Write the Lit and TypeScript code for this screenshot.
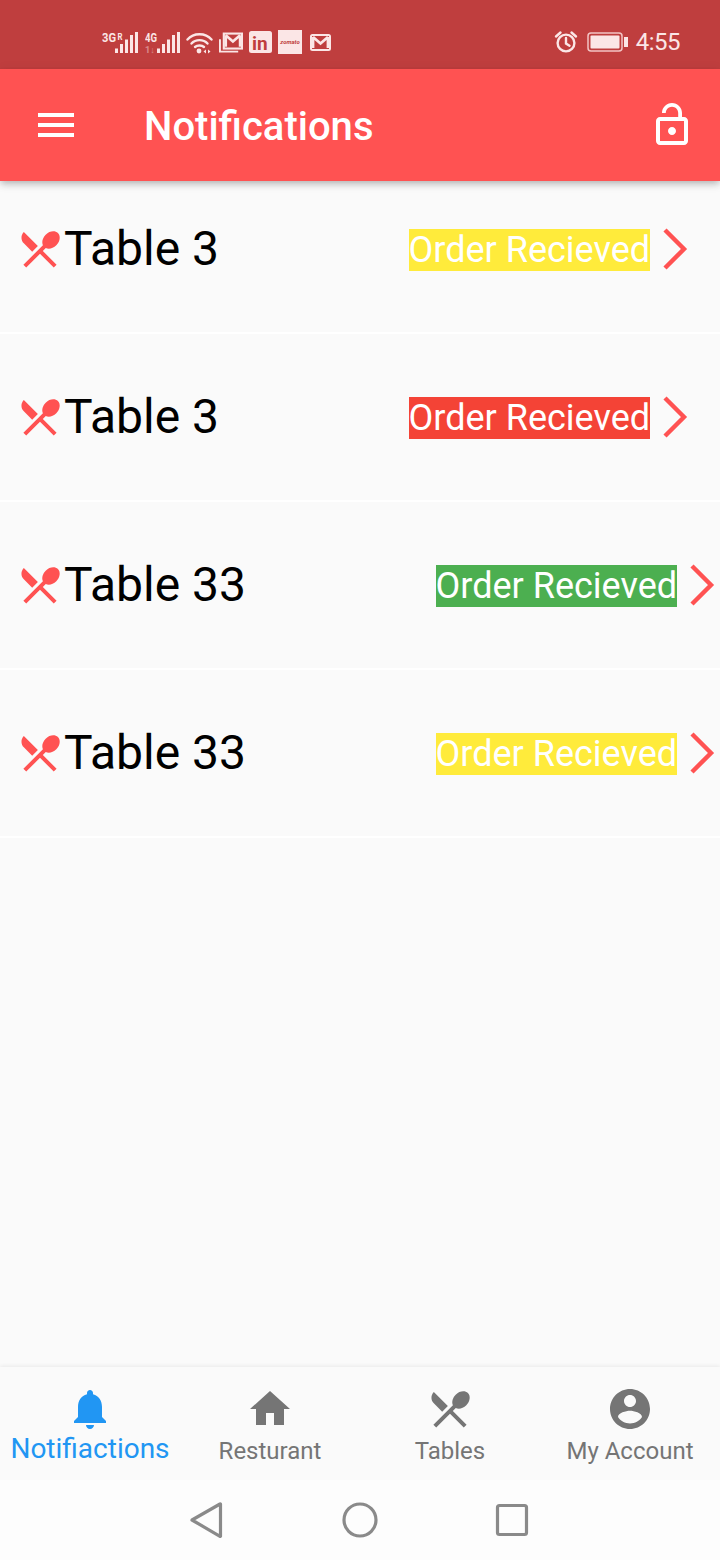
import { LitElement, html, css, svg } from "lit";
import { customElement } from "lit/decorators.js";

const DINING = "M8.1 13.34l2.83-2.83L3.91 3.5c-1.56 1.56-1.56 4.09 0 5.66l4.19 4.18zm6.78-1.81c1.53.71 3.68.21 5.27-1.38 1.91-1.91 2.28-4.65.81-6.12-1.46-1.46-4.2-1.1-6.12.81-1.59 1.59-2.09 3.74-1.38 5.27L3.7 19.87l1.41 1.41L12 14.41l6.88 6.88 1.41-1.41L13.41 13l1.47-1.47z";
const BELL = "M12 22c1.1 0 2-.9 2-2h-4c0 1.1.89 2 2 2zm6-6v-5c0-3.07-1.64-5.64-4.5-6.32V4c0-.83-.67-1.5-1.5-1.5s-1.5.67-1.5 1.5v.68C7.63 5.36 6 7.92 6 11v5l-2 2v1h16v-1l-2-2z";
const HOME = "M10 20v-6h4v6h5v-8h3L12 3 2 12h3v8z";
const ACCOUNT = "M12 2C6.48 2 2 6.48 2 12s4.48 10 10 10 10-4.48 10-10S17.52 2 12 2zm0 3c1.66 0 3 1.34 3 3s-1.34 3-3 3-3-1.34-3-3 1.34-3 3-3zm0 14.2c-2.5 0-4.71-1.28-6-3.22.03-1.99 4-3.08 6-3.08 1.99 0 5.97 1.09 6 3.08-1.29 1.94-3.5 3.22-6 3.22z";
const LOCK = "M12 17c1.1 0 2-.9 2-2s-.9-2-2-2-2 .9-2 2 .9 2 2 2zm6-9h-1V6c0-2.76-2.24-5-5-5S7 3.24 7 6h1.9c0-1.71 1.39-3.1 3.1-3.1 1.71 0 3.1 1.39 3.1 3.1v2H6c-1.1 0-2 .9-2 2v10c0 1.1.9 2 2 2h12c1.1 0 2-.9 2-2V10c0-1.1-.9-2-2-2zm0 12H6V10h12v10z";
const MENU = "M3 18h18v-2H3v2zm0-5h18v-2H3v2zm0-7v2h18V6H3z";

const icon = (d: string, size: number, cls = "") =>
  html`<svg class=${cls} width=${size} height=${size} viewBox="0 0 24 24" fill="currentColor"><path d=${d}></path></svg>`;

const bars = () => svg`
  <rect x="0" y="16.5" width="3" height="4.5" />
  <rect x="5" y="12" width="3" height="9" />
  <rect x="10" y="7.5" width="3" height="13.5" />
  <rect x="15" y="3" width="3" height="18" />
  <rect x="20" y="0" width="3" height="21" />`;

interface Row { table: string; color: string; }
const ROWS: Row[] = [
  { table: "Table 3", color: "#ffeb3b" },
  { table: "Table 3", color: "#f44336" },
  { table: "Table 33", color: "#4caf50" },
  { table: "Table 33", color: "#ffeb3b" },
];

const TABS = [
  { label: "Notifiactions", d: BELL, active: true },
  { label: "Resturant", d: HOME, active: false },
  { label: "Tables", d: DINING, active: false },
  { label: "My Account", d: ACCOUNT, active: false },
];

@customElement("app-root")
export class AppRoot extends LitElement {
  static styles = css`
    :host {
      display: block;
      width: 720px;
      height: 1560px;
      background: #fafafa;
      font-family: Roboto, "Liberation Sans", sans-serif;
      overflow: hidden;
    }
    .page { display: flex; flex-direction: column; height: 1560px; }
    .status {
      height: 69px;
      flex: none;
      background: #bf3e3e;
      color: #fbe6e6;
      display: flex;
      align-items: center;
      padding: 15px 40px 0 102px;
      box-sizing: border-box;
    }
    .status svg { display: block; flex: none; }
    .status .sig { fill: #fbe6e6; font-family: Roboto, sans-serif; }
    .status-left { display: flex; align-items: center; gap: 6px; }
    .status-right { margin-left: auto; display: flex; align-items: center; }
    .time { font-size: 24px; margin-left: 8px; line-height: 28px; letter-spacing: -0.5px; }
    .appbar {
      height: 112px;
      flex: none;
      background: #ff5252;
      color: #fff;
      display: flex;
      align-items: center;
      padding: 0 24px 0 32px;
      box-shadow: 0 3px 6px -1px rgba(0,0,0,.18), 0 5px 8px rgba(0,0,0,.08), 0 1px 12px rgba(0,0,0,.06);
      position: relative;
      z-index: 1;
      box-sizing: border-box;
    }
    .title { font-size: 40px; font-weight: 500; margin-left: 64px; flex: 1; padding-top: 2px; }
    .list { flex: 1; }
    .row {
      height: 168px;
      box-sizing: border-box;
      border-bottom: 2px solid #fff;
      display: flex;
      align-items: center;
      padding: 0 0 0 16px;
      color: #ff5252;
    }
    .row.first { height: 153px; padding-bottom: 15px; }
    .row > svg { flex: none; display: block; }
    .table { color: #000; font-size: 48px; margin: 0 189.5px 2px 0; white-space: nowrap; }
    .badge {
      color: #fff;
      font-size: 36px;
      line-height: 42px;
      height: 42px;
      margin-top: 2px;
      white-space: nowrap;
    }
    .chev { margin-left: 12px; }
    .tabs {
      height: 113px;
      flex: none;
      display: flex;
      background: #fafafa;
      box-shadow: 0 -1px 4px rgba(0,0,0,.07);
    }
    .tab {
      flex: 1;
      display: flex;
      flex-direction: column;
      align-items: center;
      padding-top: 18px;
      color: #757575;
      font-size: 24px;
      box-sizing: border-box;
    }
    .tab svg { display: block; flex: none; }
    .tab span { line-height: 28px; margin-top: 4px; }
    .tab.active { color: #2196f3; font-size: 28px; }
    .tab.active span { line-height: 32px; margin-top: 0; }
    .sysnav {
      height: 80px;
      flex: none;
      background: #fdfdfd;
      display: flex;
      justify-content: center;
      align-items: center;
    }
    .sysnav svg { display: block; }
  `;

  private statusIcons() {
    return html`
      <svg class="sig" width="36" height="23" viewBox="0 0 36 23">
        <text x="0" y="11" font-size="13" font-weight="700" textLength="14" lengthAdjust="spacingAndGlyphs">3G</text>
        <text x="15.5" y="9" font-size="9.5" font-weight="700" textLength="5" lengthAdjust="spacingAndGlyphs">R</text>
        <g transform="translate(13 1)">${bars()}</g>
      </svg>
      <svg class="sig" width="35" height="23" viewBox="0 0 35 23" style="margin-left:1px">
        <text x="0" y="11" font-size="13" font-weight="700" textLength="12" lengthAdjust="spacingAndGlyphs">4G</text>
        <text x="0" y="22" font-size="9" font-weight="700" opacity=".45">1↓</text>
        <g transform="translate(12 1)">${bars()}</g>
      </svg>
      <svg class="sig" width="27" height="23" viewBox="0 0 27 23">
        <g fill="none" stroke="#fbe6e6" stroke-width="2.4" stroke-linecap="round">
          <path d="M1.5 8.5C7.5 1.5 19.5 1.5 25.5 8.5"></path>
          <path d="M5.5 12.5C9.5 8 17.5 8 21.5 12.5"></path>
          <path d="M9 16c2.2-2 6.8-2 9 0"></path>
        </g>
        <circle cx="13" cy="20" r="2.4"></circle>
        <path d="M17.5 20.5l2.5-2v4zM22 18.5l2.5 2-2.5 2z"></path>
      </svg>
      <svg width="24" height="21" viewBox="0 0 25 21">
        <path d="M1 7v13h19" fill="none" stroke="#fbe6e6" stroke-width="2"></path>
        <rect x="5" y="1.2" width="19" height="15.6" fill="none" stroke="#fbe6e6" stroke-width="2.2"></rect>
        <path d="M7 3v12M22 3v12M7 3l7.5 6.5L22 3" fill="none" stroke="#fbe6e6" stroke-width="2.8"></path>
      </svg>
      <svg class="sig" width="23" height="22" viewBox="0 0 23 22">
        <rect width="23" height="22" rx="2.5" fill="#fbe6e6"></rect>
        <text x="3" y="18.5" font-size="19" font-weight="700" fill="#bf3e3e">in</text>
      </svg>
      <svg width="24" height="24" viewBox="0 0 24 24">
        <rect width="24" height="24" fill="#fbe6e6"></rect>
        <text x="12" y="14" font-size="6" font-weight="700" font-style="italic" text-anchor="middle" fill="#bf3e3e" font-family="Roboto, sans-serif">zomato</text>
      </svg>
      <svg width="21" height="17" viewBox="0 0 21 17" style="margin-left:2px">
        <rect x="1" y="1" width="19" height="15" rx="1.5" fill="none" stroke="#fbe6e6" stroke-width="2"></rect>
        <path d="M3 3v11M18 3v11M3 3l7.5 6.5L18 3" fill="none" stroke="#fbe6e6" stroke-width="2.8"></path>
      </svg>`;
  }

  render() {
    return html`
      <div class="page">
        <div class="status">
          <div class="status-left">${this.statusIcons()}</div>
          <div class="status-right">
            <svg width="24" height="24" viewBox="0 0 24 24" fill="none" stroke="#fbe6e6" stroke-width="2.4">
              <circle cx="12" cy="13" r="8.4"></circle>
              <path d="M12 8v5.5l3.5 2.2M2 6.5L6.5 2.5M22 6.5L17.5 2.5" stroke-linecap="round"></path>
            </svg>
            <svg width="41" height="20" viewBox="0 0 41 20" style="margin-left:9px">
              <rect x="1" y="1" width="34" height="18" rx="3" fill="none" stroke="#f3c4c4" stroke-width="1.5"></rect>
              <rect x="3.5" y="3.5" width="29" height="13" rx="1" fill="#fbe6e6"></rect>
              <rect x="37" y="5" width="4" height="10" fill="#fbe6e6"></rect>
            </svg>
            <span class="time">4:55</span>
          </div>
        </div>
        <div class="appbar">
          ${icon(MENU, 48)}
          <div class="title">Notifications</div>
          ${icon(LOCK, 48)}
        </div>
        <div class="list">
          ${ROWS.map((r, i) => html`
            <div class="row ${i === 0 ? "first" : ""}">
              ${icon(DINING, 48)}
              <span class="table">${r.table}</span>
              <span class="badge" style="background:${r.color}">Order Recieved</span>
              <svg class="chev" width="26" height="42" viewBox="0 0 26 42" fill="none" stroke="currentColor" stroke-width="4.4">
                <path d="M3 2l19 19L3 40"></path>
              </svg>
            </div>`)}
        </div>
        <div class="tabs">
          ${TABS.map((t) => html`
            <div class="tab ${t.active ? "active" : ""}">
              ${icon(t.d, 48)}
              <span>${t.label}</span>
            </div>`)}
        </div>
        <div class="sysnav">
          <svg width="360" height="40" viewBox="0 0 360 40" fill="none" stroke="#8a8a8a" stroke-width="3.2" stroke-linejoin="round">
            <path d="M12 20L40 4a.3.3 0 0 1 .5.3V36a.3.3 0 0 1-.5.3z"></path>
            <circle cx="180" cy="20" r="16"></circle>
            <rect x="317.5" y="5.5" width="29" height="29" rx="2"></rect>
          </svg>
        </div>
      </div>`;
  }
}
